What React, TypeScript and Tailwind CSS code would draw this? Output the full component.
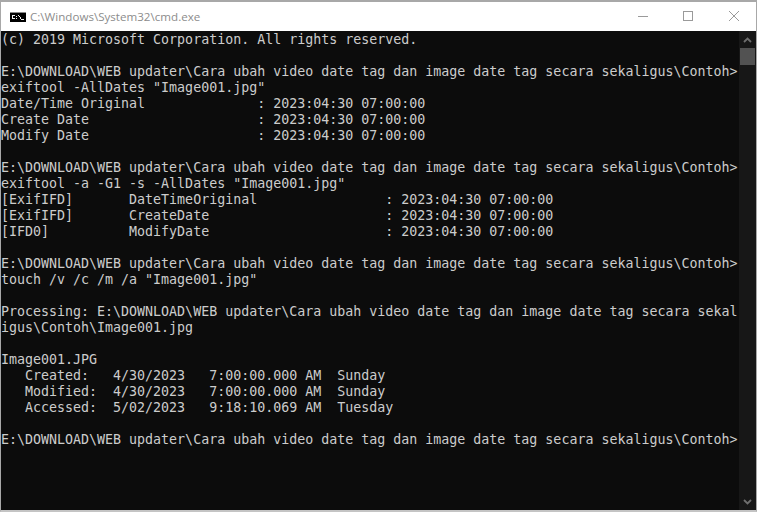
import React from "react";

const P = String.raw`E:\DOWNLOAD\WEB updater\Cara ubah video date tag dan image date tag secara sekaligus\Contoh>`;
const lines = [
  "(c) 2019 Microsoft Corporation. All rights reserved.",
  "",
  P,
  `exiftool -AllDates "Image001.jpg"`,
  "Date/Time Original              : 2023:04:30 07:00:00",
  "Create Date                     : 2023:04:30 07:00:00",
  "Modify Date                     : 2023:04:30 07:00:00",
  "",
  P,
  `exiftool -a -G1 -s -AllDates "Image001.jpg"`,
  "[ExifIFD]       DateTimeOriginal                : 2023:04:30 07:00:00",
  "[ExifIFD]       CreateDate                      : 2023:04:30 07:00:00",
  "[IFD0]          ModifyDate                      : 2023:04:30 07:00:00",
  "",
  P,
  `touch /v /c /m /a "Image001.jpg"`,
  "",
  String.raw`Processing: E:\DOWNLOAD\WEB updater\Cara ubah video date tag dan image date tag secara sekal`,
  String.raw`igus\Contoh\Image001.jpg`,
  "",
  "Image001.JPG",
  "   Created:   4/30/2023   7:00:00.000 AM  Sunday",
  "   Modified:  4/30/2023   7:00:00.000 AM  Sunday",
  "   Accessed:  5/02/2023   9:18:10.069 AM  Tuesday",
  "",
  P,
];

export default function App() {
  return (
    <div className="flex h-[512px] w-[757px] flex-col overflow-hidden border border-t-2 border-b-2 border-x-[#a8a8a8] border-t-[#a8a8a8] border-b-[#c4c4c4] bg-white font-['Segoe_UI','Open_Sans',sans-serif]">
      <div className="flex h-[29px] shrink-0 items-center bg-white">
        <svg className="ml-[9px] shrink-0" width="16" height="10" viewBox="0 0 16 10">
          <rect x="0" y="0" width="16" height="10" fill="#000" />
          <rect x="0" y="0" width="16" height="1" fill="#8a8a8a" />
          <path d="M2 3h3v1H2zM2 4h1v2H2zM2 6h3v1H2zM6 4h1v1H6zM6 6h1v1H6zM8 3h1v1H8zM9 4h1v1H9zM10 5h1v2h-1zM11 7h3v1h-3z" fill="#f0f0f0" />
        </svg>
        <span className="ml-[4px] text-[11.6px] text-[#8c8c8c]">C:\Windows\System32\cmd.exe</span>
        <div className="ml-auto flex items-center pb-[2px] pr-[17px]">
          <svg width="10" height="10" viewBox="0 0 10 10" className="mr-[35px]">
            <path d="M0 5.5h10" stroke="#9a9a9a" strokeWidth="1" />
          </svg>
          <svg width="10" height="10" viewBox="0 0 10 10" className="mr-[36px]">
            <rect x="0.5" y="0.5" width="9" height="9" fill="none" stroke="#9a9a9a" />
          </svg>
          <svg width="10" height="10" viewBox="0 0 10 10">
            <path d="M0 0l10 10M10 0L0 10" stroke="#9a9a9a" strokeWidth="1" />
          </svg>
        </div>
      </div>
      <div className="flex min-h-0 flex-1 bg-[#0c0c0c]">
        <div className="min-w-0 flex-1 overflow-hidden whitespace-pre pt-[1px] font-['DejaVu_Sans_Mono',monospace] text-[13.3px] leading-[16px] text-[#cccccc]">
          {lines.map((l, i) => (
            <div key={i} className="h-[16px]">
              {l}
            </div>
          ))}
        </div>
        <div className="flex w-[17px] shrink-0 flex-col items-center bg-[#171717] px-px">
          <div className="flex h-[17px] w-full items-center justify-center">
            <svg width="9" height="6" viewBox="0 0 9 6">
              <path d="M1 5l3.5-3.5L8 5" fill="none" stroke="#6e6e6e" strokeWidth="1.8" />
            </svg>
          </div>
          <div className="h-[17px] w-full bg-[#525252]" />
          <div className="flex-1" />
          <div className="flex h-[17px] w-full items-center justify-center">
            <svg width="9" height="6" viewBox="0 0 9 6">
              <path d="M1 1l3.5 3.5L8 1" fill="none" stroke="#6e6e6e" strokeWidth="1.8" />
            </svg>
          </div>
        </div>
      </div>
    </div>
  );
}
